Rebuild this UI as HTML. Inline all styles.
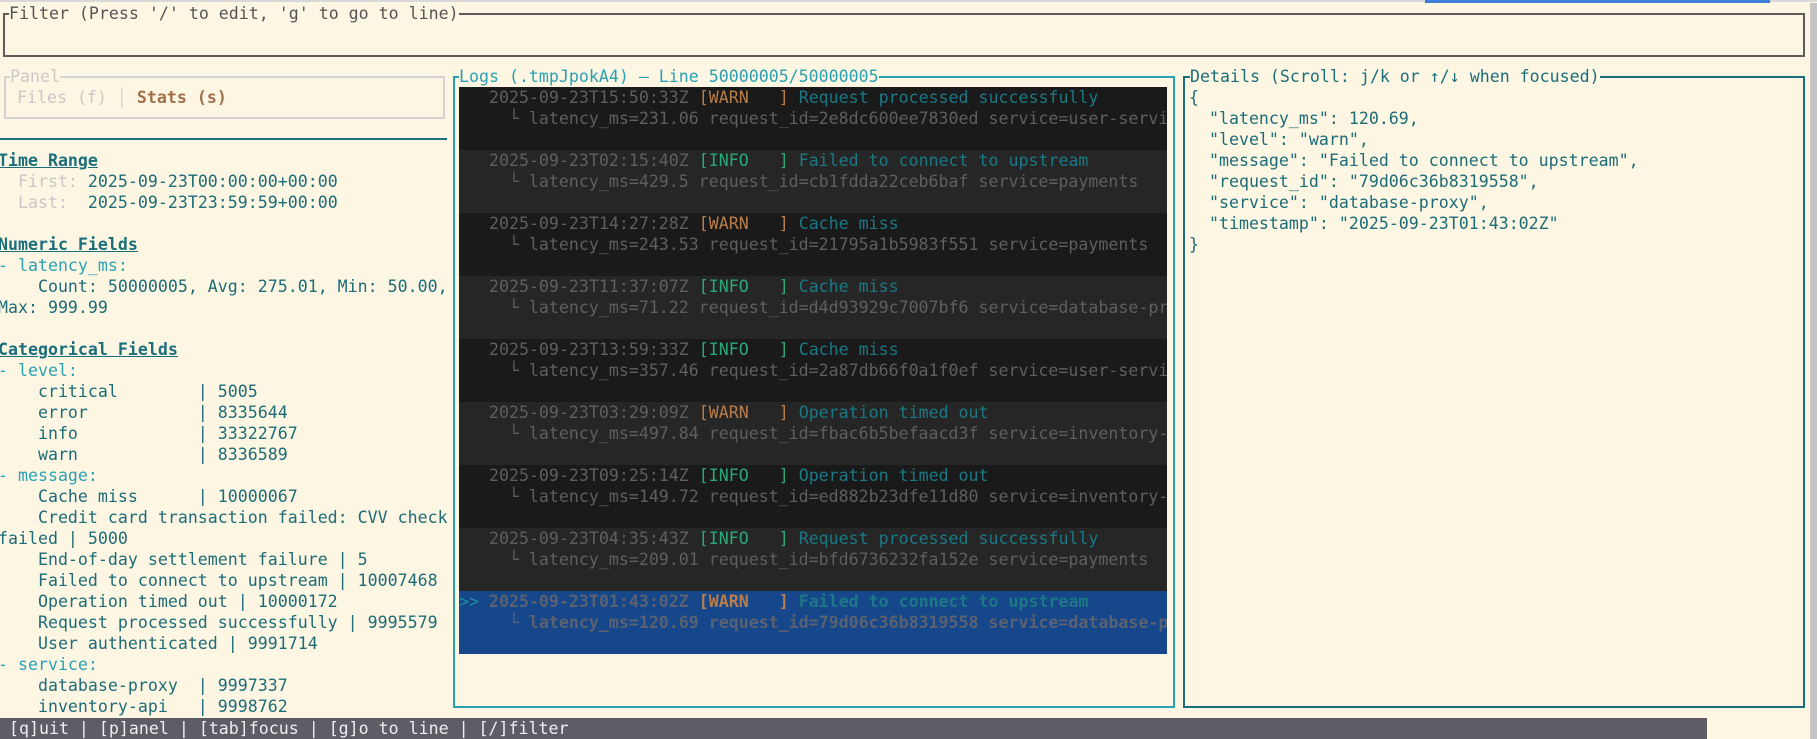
<!DOCTYPE html>
<html><head><meta charset="utf-8"><style>
*{margin:0;padding:0;box-sizing:border-box}
body{width:1817px;height:739px;background:#fdf6e3;position:relative;overflow:hidden;font-family:"DejaVu Sans Mono","Liberation Mono",monospace;font-size:16.6px;line-height:21px}
.a{position:absolute;white-space:pre}
.box{position:absolute;border:2px solid}
.t{background:#fdf6e3}
.lc{position:absolute;left:459px;width:708px;height:63px;overflow:hidden;white-space:pre;color:#5f5f5f}
.d1{background:#1a1a1a}.d2{background:#262626}
.w{color:#b87d4b}.i{color:#2aa876}.m{color:#1b7884}
.sel{background:#15478a;color:#5b6170;font-weight:bold}
.h{color:#1b6e7c;font-weight:bold;text-decoration:underline}
.k{color:#2aa1b3}.v{color:#1d6c78}.g{color:#c8c8c8}
</style></head><body>
<div style="position:absolute;left:0;top:0;width:1817px;height:2px;background:#d8d8d8"></div>
<div style="position:absolute;left:1425px;top:0;width:345px;height:3px;background:#3b7fd6"></div>
<div style="position:absolute;left:1810px;top:3px;width:7px;height:736px;background:#c4c4c4"></div>

<div class="box" style="left:3px;top:13px;width:1802px;height:44px;border-color:#5c5c5c"></div>
<div class="a t" style="left:9px;top:3px;color:#555">Filter (Press '/' to edit, 'g' to go to line)</div>

<div class="box" style="left:4px;top:76px;width:441px;height:43px;border-color:#d3d3d3"></div>
<div class="a t" style="left:10px;top:66px;color:#c9c9c9">Panel</div>
<div class="a" style="left:17px;top:87px"><span class="g">Files (f)</span> <span style="color:#d3d3d3">│</span> <span style="color:#a0704a;font-weight:bold">Stats (s)</span></div>
<div style="position:absolute;left:0;top:138px;width:447px;height:2px;background:#1d6f7d"></div>

<div class="a v" style="left:-2px;top:150px"><span class="h">Time Range</span>
  <span class="g">First:</span> 2025-09-23T00:00:00+00:00
  <span class="g">Last: </span> 2025-09-23T23:59:59+00:00

<span class="h">Numeric Fields</span>
<span class="k">- latency_ms:</span>
    Count: 50000005, Avg: 275.01, Min: 50.00,
Max: 999.99

<span class="h">Categorical Fields</span>
<span class="k">- level:</span>
    critical        | 5005
    error           | 8335644
    info            | 33322767
    warn            | 8336589
<span class="k">- message:</span>
    Cache miss      | 10000067
    Credit card transaction failed: CVV check
failed | 5000
    End-of-day settlement failure | 5
    Failed to connect to upstream | 10007468
    Operation timed out | 10000172
    Request processed successfully | 9995579
    User authenticated | 9991714
<span class="k">- service:</span>
    database-proxy  | 9997337
    inventory-api   | 9998762</div>

<div class="box" style="left:453px;top:76px;width:722px;height:632px;border-color:#2aa1b3"></div>
<div class="a t" style="left:459px;top:66px;color:#2aa1b3">Logs (.tmpJpokA4) – Line 50000005/50000005</div>

<div class="lc d1" style="top:87px">   2025-09-23T15:50:33Z <span class="w">[WARN   ]</span> <span class="m">Request processed successfully</span>
     └ latency_ms=231.06 request_id=2e8dc600ee7830ed service=user-service</div>
<div class="lc d2" style="top:150px">   2025-09-23T02:15:40Z <span class="i">[INFO   ]</span> <span class="m">Failed to connect to upstream</span>
     └ latency_ms=429.5 request_id=cb1fdda22ceb6baf service=payments</div>
<div class="lc d1" style="top:213px">   2025-09-23T14:27:28Z <span class="w">[WARN   ]</span> <span class="m">Cache miss</span>
     └ latency_ms=243.53 request_id=21795a1b5983f551 service=payments</div>
<div class="lc d2" style="top:276px">   2025-09-23T11:37:07Z <span class="i">[INFO   ]</span> <span class="m">Cache miss</span>
     └ latency_ms=71.22 request_id=d4d93929c7007bf6 service=database-proxy</div>
<div class="lc d1" style="top:339px">   2025-09-23T13:59:33Z <span class="i">[INFO   ]</span> <span class="m">Cache miss</span>
     └ latency_ms=357.46 request_id=2a87db66f0a1f0ef service=user-service</div>
<div class="lc d2" style="top:402px">   2025-09-23T03:29:09Z <span class="w">[WARN   ]</span> <span class="m">Operation timed out</span>
     └ latency_ms=497.84 request_id=fbac6b5befaacd3f service=inventory-api</div>
<div class="lc d1" style="top:465px">   2025-09-23T09:25:14Z <span class="i">[INFO   ]</span> <span class="m">Operation timed out</span>
     └ latency_ms=149.72 request_id=ed882b23dfe11d80 service=inventory-api</div>
<div class="lc d2" style="top:528px">   2025-09-23T04:35:43Z <span class="i">[INFO   ]</span> <span class="m">Request processed successfully</span>
     └ latency_ms=209.01 request_id=bfd6736232fa152e service=payments</div>
<div class="lc sel" style="top:591px"><span style="color:#1f8fa0;font-weight:normal">&gt;&gt;</span> 2025-09-23T01:43:02Z <span class="w">[WARN   ]</span> <span class="m">Failed to connect to upstream</span>
     └ latency_ms=120.69 request_id=79d06c36b8319558 service=database-proxy</div>

<div class="box" style="left:1183px;top:76px;width:622px;height:632px;border-color:#1b6e7c"></div>
<div class="a t" style="left:1190px;top:66px;color:#1b6e7c">Details (Scroll: j/k or ↑/↓ when focused)</div>
<div class="a v" style="left:1189px;top:87px">{
  "latency_ms": 120.69,
  "level": "warn",
  "message": "Failed to connect to upstream",
  "request_id": "79d06c36b8319558",
  "service": "database-proxy",
  "timestamp": "2025-09-23T01:43:02Z"
}</div>

<div class="a" style="left:0;top:718px;width:1707px;height:21px;background:#5e5d66;color:#eeeeee;padding-left:9px">[q]uit | [p]anel | [tab]focus | [g]o to line | [/]filter</div>
</body></html>
